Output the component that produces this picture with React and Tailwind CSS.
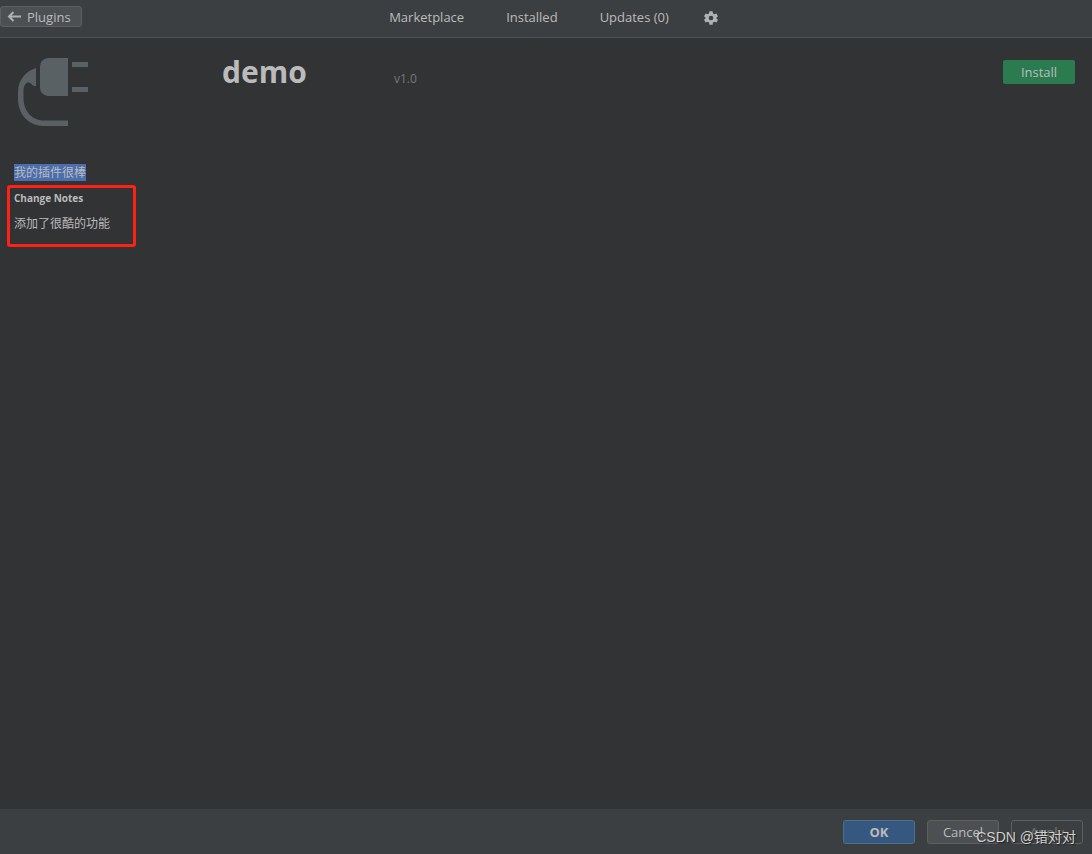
const tabs = ["Marketplace", "Installed", "Updates (0)"];

// Large grey plug shown when a plugin ships without its own logo.
const PlugLogo = () => (
  <svg width="72" height="70" viewBox="0 0 72 70" fill="#5a6164" aria-hidden="true">
    <path d="M31 1H51V39H31Q23 38 23 30V10Q23 2 31 1Z" />
    <path d="M55 5H71V10H55ZM55 30H71V35H55Z" />
    <path d="M19 11V29C15 29.500 14.500 26 12 25.500C8.500 25 6.500 29 6.500 34V41C6.500 54 15 63.500 27 63.500H51V69H27C11.500 69 1 57 1 42V35C1 23 9 14 19 11Z" />
  </svg>
);

const BackArrow = () => (
  <svg width="14" height="12" viewBox="0 0 14 12" fill="none" stroke="#afb1b3" strokeWidth="2" aria-hidden="true">
    <path d="M14 5.500H2.500M6.500 1L2 5.500L6.500 10" />
  </svg>
);

const GearIcon = () => (
  <svg width="16" height="16" viewBox="0 0 24 24" fill="#afb1b3" aria-hidden="true">
    <path
      fillRule="evenodd"
      d="M9.700 2H14.300L15 5.100L17.100 6.300L20.100 5.400L22.400 9.400L20.100 11.500V12.500L22.400 14.600L20.100 18.600L17.100 17.700L15 18.900L14.300 22H9.700L9 18.900L6.900 17.700L3.900 18.600L1.600 14.600L3.900 12.500V11.500L1.600 9.400L3.900 5.400L6.900 6.300L9 5.100ZM12 8.500A3.500 3.500 0 1 0 12 15.500A3.500 3.500 0 1 0 12 8.500Z"
    />
  </svg>
);

// Top bar with the back button and the plugin tabs.
const Header = () => (
  <header className="flex items-start border-b border-[#515151] bg-[#3c3f41] pb-1">
    <div className="flex flex-1 pt-1.5">
      <button className="flex h-[21px] items-center gap-1.5 rounded-[3px] border border-[#5e6060] bg-[#4c5052] pr-2.5 pl-1.5">
        <BackArrow />
        Plugins
      </button>
    </div>
    <nav className="flex h-[33px] items-center pl-4">
      <div className="flex gap-[42px]">
        {tabs.map((tab) => (
          <button key={tab}>{tab}</button>
        ))}
      </div>
      <button aria-label="Settings" className="ml-[34px] pt-0.5">
        <GearIcon />
      </button>
    </nav>
    <div className="flex-1" />
  </header>
);

// Logo, name, version and the install action.
const PluginSummary = () => (
  <section className="flex items-start px-[17px] pt-[19px]">
    <div className="w-[205px]">
      <PlugLogo />
    </div>
    <div className="flex flex-1 items-baseline">
      <h1 className="w-[172px] text-[30px] leading-[30px] font-bold">demo</h1>
      <span className="text-xs text-[#777777]">v1.0</span>
    </div>
    <button className="mt-[3px] h-6 w-[72px] rounded-xs bg-[#2b7b50]">Install</button>
  </section>
);

const Description = () => (
  <section className="px-2 pt-[37px] text-xs leading-[17px]">
    <p className="px-1.5">
      <mark className="bg-[#4b6eaf] text-[#bbbbbb]">我的插件很棒</mark>
    </p>
    <div className="mt-1 -ml-px h-[62px] w-[129px] rounded-[3px] border-3 border-[#ff2116] px-1">
      <h2 className="pt-0.5 text-[10px] font-bold">Change Notes</h2>
      <p className="mt-2">添加了很酷的功能</p>
    </div>
  </section>
);

const Footer = () => (
  <footer className="relative flex justify-end gap-3 bg-[#3c3f41] px-[9px] pt-[11px] pb-2.5">
    <button className="h-6 w-[72px] rounded-[3px] border border-[#4c708c] bg-[#365880] font-bold">OK</button>
    <button className="h-6 w-[72px] rounded-[3px] border border-[#5e6060] bg-[#4c5052]">Cancel</button>
    <button disabled className="h-6 w-[72px] rounded-[3px] border border-[#5e6060] text-[#777777]">
      Apply
    </button>
    <span className="pointer-events-none absolute right-4 bottom-[7px] font-['Liberation_Sans','Noto_Sans_CJK_SC',sans-serif] text-sm text-[#d0d0d0] text-shadow-[1px_1px_1px_#222222]">
      CSDN @错对对
    </span>
  </footer>
);

const App = () => (
  <div className="flex min-h-screen flex-col bg-[#313335] font-['Open_Sans','Noto_Sans_CJK_SC',sans-serif] text-[13px] leading-[18px] text-[#bbbbbb]">
    <Header />
    <main className="flex-1">
      <PluginSummary />
      <Description />
    </main>
    <Footer />
  </div>
);

export default App;
